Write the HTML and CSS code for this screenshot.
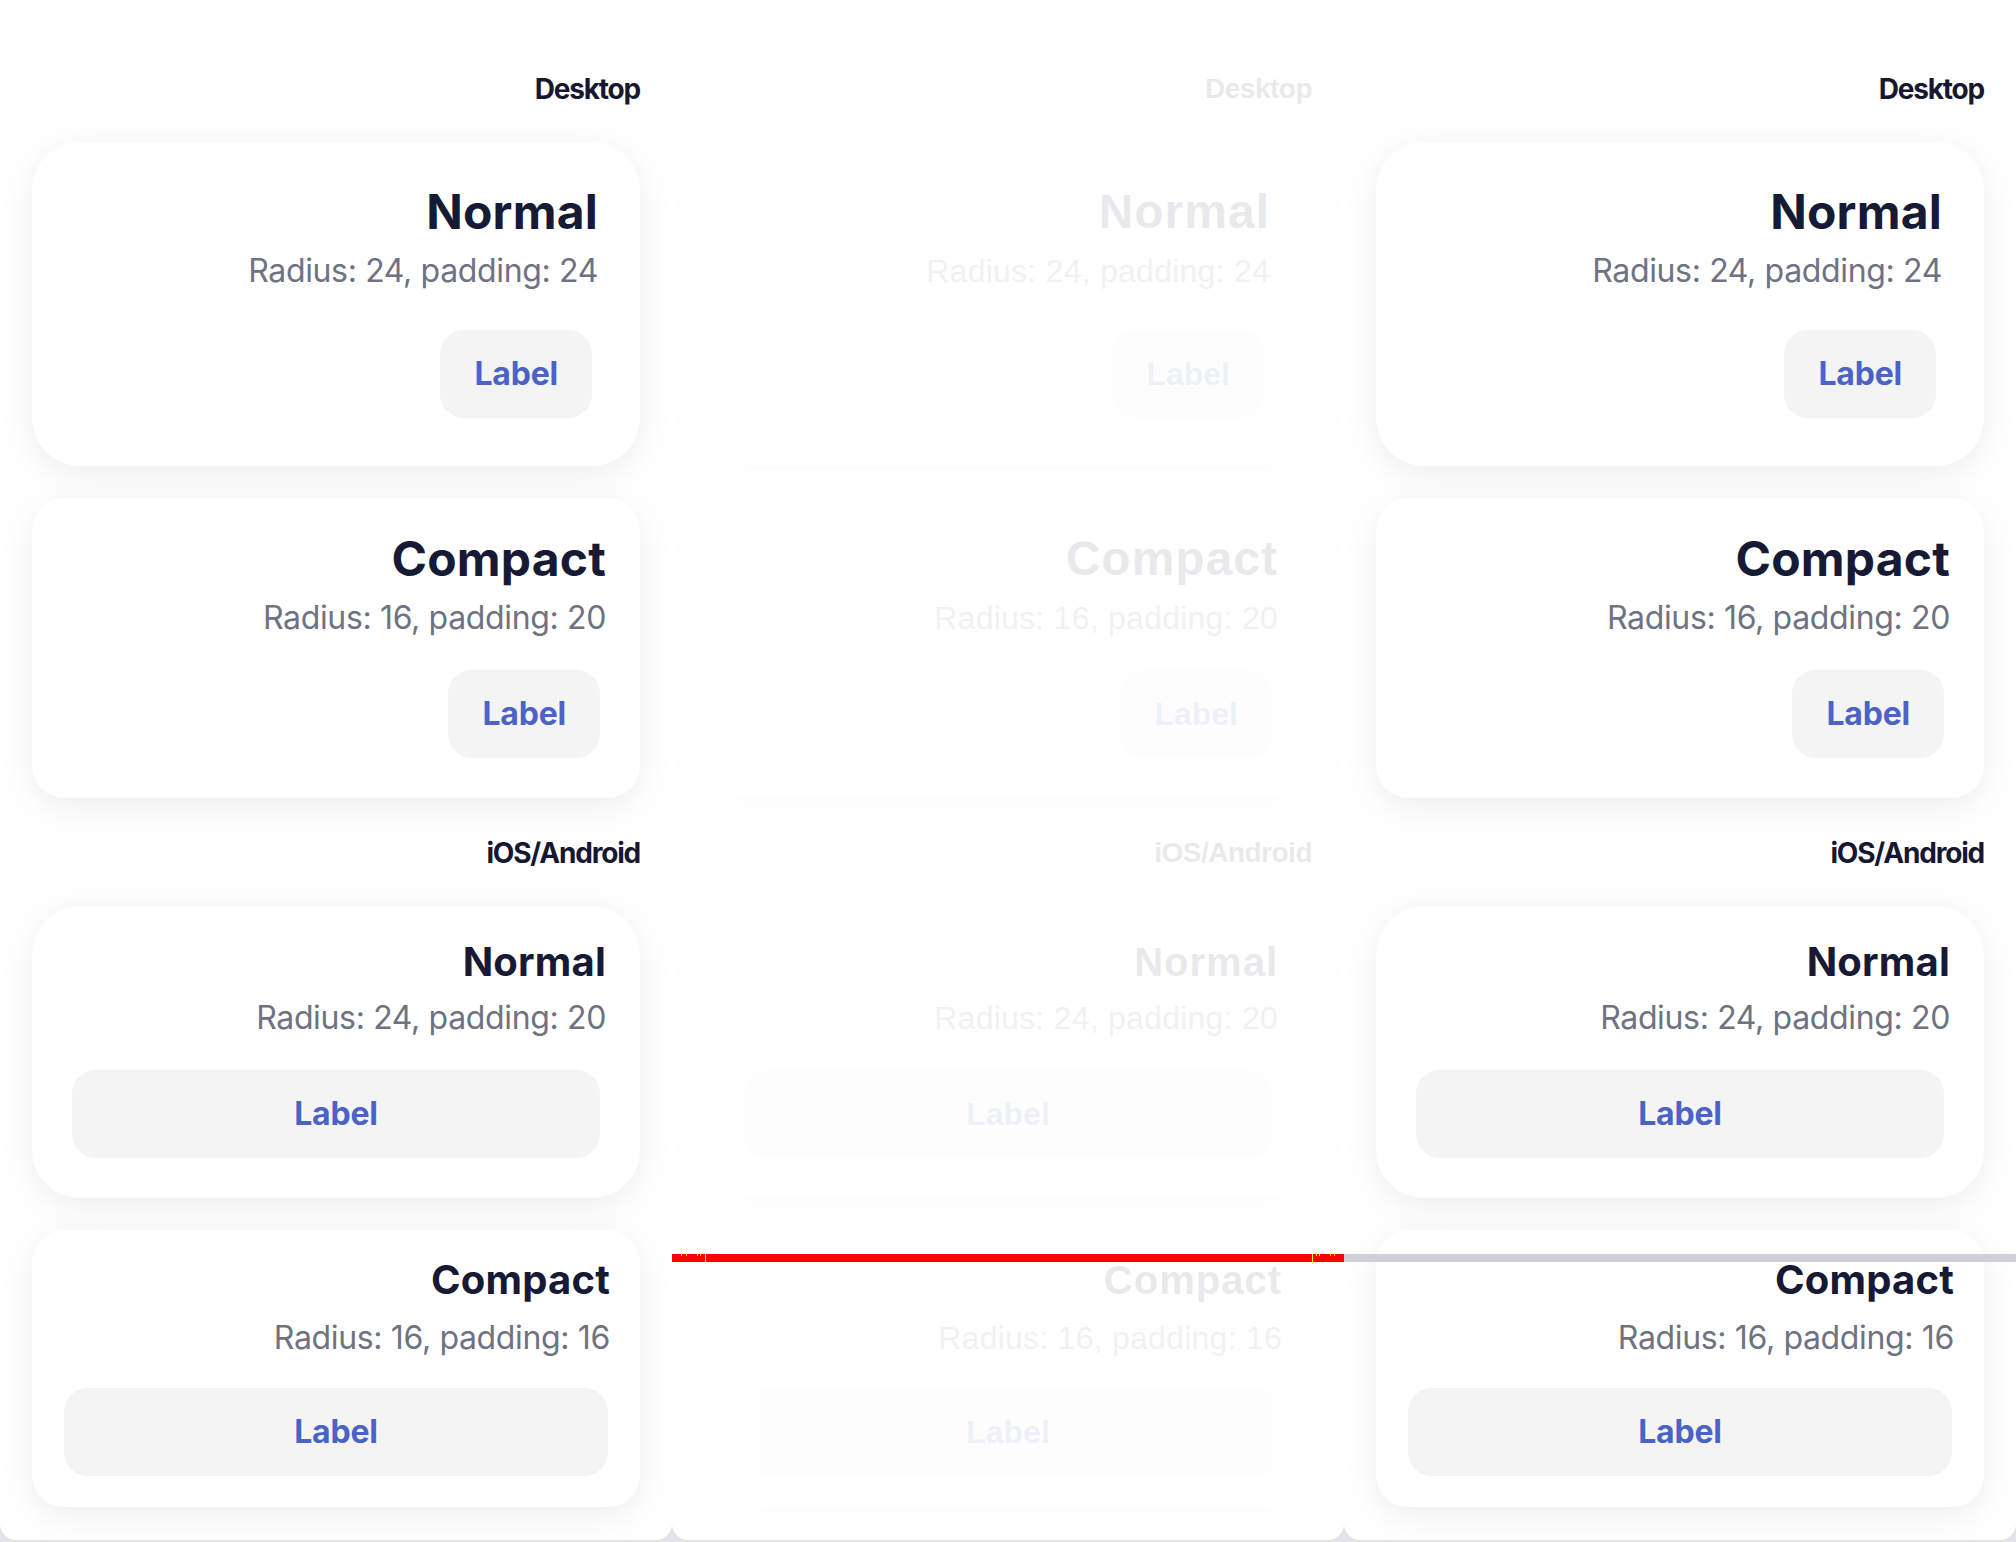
FILE: index.html
```html
<!DOCTYPE html>
<html lang="en">
<head>
<meta charset="utf-8">
<title>Card sizes</title>
<link rel="stylesheet" href="styles.css">
</head>
<body>
<div class="page">
  <section class="frame">
    <div class="frame-content">
      <div class="group">
        <div class="group-label">Desktop</div>
        <div class="card card-d-normal">
          <div class="card-head"><h2 class="card-title">Normal</h2><p class="card-sub">Radius: 24, padding: 24</p></div>
          <button class="btn">Label</button>
        </div>
        <div class="card card-d-compact">
          <div class="card-head"><h2 class="card-title">Compact</h2><p class="card-sub">Radius: 16, padding: 20</p></div>
          <button class="btn">Label</button>
        </div>
      </div>
      <div class="group">
        <div class="group-label">iOS/Android</div>
        <div class="card card-m-normal">
          <div class="card-head"><h2 class="card-title">Normal</h2><p class="card-sub">Radius: 24, padding: 20</p></div>
          <button class="btn">Label</button>
        </div>
        <div class="card card-m-compact">
          <div class="card-head"><h2 class="card-title">Compact</h2><p class="card-sub">Radius: 16, padding: 16</p></div>
          <button class="btn">Label</button>
        </div>
      </div>
    </div>
  </section>

  <section class="frame frame-ghost">
    <div class="frame-content">
      <div class="group">
        <div class="group-label">Desktop</div>
        <div class="card card-d-normal">
          <div class="card-head"><h2 class="card-title">Normal</h2><p class="card-sub">Radius: 24, padding: 24</p></div>
          <button class="btn">Label</button>
        </div>
        <div class="card card-d-compact">
          <div class="card-head"><h2 class="card-title">Compact</h2><p class="card-sub">Radius: 16, padding: 20</p></div>
          <button class="btn">Label</button>
        </div>
      </div>
      <div class="group">
        <div class="group-label">iOS/Android</div>
        <div class="card card-m-normal">
          <div class="card-head"><h2 class="card-title">Normal</h2><p class="card-sub">Radius: 24, padding: 20</p></div>
          <button class="btn">Label</button>
        </div>
        <div class="card card-m-compact">
          <div class="card-head"><h2 class="card-title">Compact</h2><p class="card-sub">Radius: 16, padding: 16</p></div>
          <button class="btn">Label</button>
        </div>
      </div>
    </div>
  </section>

  <section class="frame">
    <div class="frame-content">
      <div class="group">
        <div class="group-label">Desktop</div>
        <div class="card card-d-normal">
          <div class="card-head"><h2 class="card-title">Normal</h2><p class="card-sub">Radius: 24, padding: 24</p></div>
          <button class="btn">Label</button>
        </div>
        <div class="card card-d-compact">
          <div class="card-head"><h2 class="card-title">Compact</h2><p class="card-sub">Radius: 16, padding: 20</p></div>
          <button class="btn">Label</button>
        </div>
      </div>
      <div class="group">
        <div class="group-label">iOS/Android</div>
        <div class="card card-m-normal">
          <div class="card-head"><h2 class="card-title">Normal</h2><p class="card-sub">Radius: 24, padding: 20</p></div>
          <button class="btn">Label</button>
        </div>
        <div class="card card-m-compact">
          <div class="card-head"><h2 class="card-title">Compact</h2><p class="card-sub">Radius: 16, padding: 16</p></div>
          <button class="btn">Label</button>
        </div>
      </div>
    </div>
  </section>

  <div class="drop-bar">
    <div class="drop-hit">
      <span class="tick" style="left:9px"></span>
      <span class="tick" style="left:14px"></span>
      <span class="tick" style="left:25px"></span>
      <span class="tick" style="left:28px"></span>
      <span class="tick tick-tall" style="left:33px"></span>
      <span class="tick tick-tall" style="left:640px"></span>
      <span class="tick" style="left:644px"></span>
      <span class="tick" style="left:647px"></span>
      <span class="tick" style="left:658px"></span>
      <span class="tick" style="left:662px"></span>
    </div>
    <div class="drop-rest"></div>
  </div>
</div>
</body>
</html>
```

FILE: styles.css
```css
html, body {
  margin: 0;
  padding: 0;
}

body {
  width: 2016px;
  height: 1542px;
  overflow: hidden;
  background: #e4e4e6;
  font-family: "Inter", "Liberation Sans", sans-serif;
}

.page {
  position: relative;
  display: grid;
  grid-template-columns: repeat(3, 672px);
  height: 1540px;
}

.frame {
  position: relative;
  background: #ffffff;
  border-radius: 0 0 16px 16px;
  overflow: hidden;
}

.frame-content {
  padding: 69px 32px 0;
  display: flex;
  flex-direction: column;
  gap: 35px;
}

.frame-ghost .frame-content {
  opacity: 0.09;
  font-family: "Liberation Sans", Arial, sans-serif;
}

.group {
  display: flex;
  flex-direction: column;
  gap: 32px;
}

.group-label {
  font-size: 28px;
  line-height: 40px;
  font-weight: 700;
  color: #151830;
  text-align: right;
  margin-bottom: 1px;
  letter-spacing: -1.2px;
}

.card {
  background: #ffffff;
  box-shadow: 0 8px 36px rgba(0, 0, 0, 0.075);
  display: flex;
  flex-direction: column;
  align-items: flex-end;
}

.card-head {
  align-self: stretch;
  text-align: right;
  margin-right: -6px;
}

.card-title {
  margin: 0;
  font-size: 48px;
  line-height: 48px;
  font-weight: 700;
  color: #161a35;
  letter-spacing: 0.2px;
}

.card-sub {
  margin: 0;
  font-size: 32px;
  line-height: 48px;
  font-weight: 400;
  color: #6f7283;
  letter-spacing: -0.35px;
}

.btn {
  font-family: inherit;
  border: 0;
  background: #f4f4f5;
  color: #4b63c6;
  font-size: 32px;
  font-weight: 700;
  line-height: 88px;
  height: 88px;
  padding: 0 34px;
  border-radius: 24px;
  letter-spacing: -0.2px;
}

.frame-ghost .group-label { letter-spacing: -0.5px; }
.frame-ghost .card-title { letter-spacing: 1px; }
.frame-ghost .card-sub { letter-spacing: 0.25px; }
.frame-ghost .btn { letter-spacing: 0; }

/* Desktop / Normal: radius 24, padding 24 */
.card-d-normal {
  border-radius: 48px;
  padding: 46px 48px 48px;
}
.card-d-normal .card-title { margin-bottom: 11px; }
.card-d-normal .btn { margin-top: 35px; }

/* Desktop / Compact: radius 16, padding 20 */
.card-d-compact {
  border-radius: 32px;
  padding: 37px 40px 40px;
}
.card-d-compact .card-title { margin-bottom: 11px; }
.card-d-compact .btn { margin-top: 28px; }

/* iOS/Android / Normal: radius 24, padding 20 */
.card-m-normal {
  border-radius: 48px;
  padding: 36px 40px 40px;
  align-items: stretch;
}
.card-m-normal .card-title { font-size: 40px; line-height: 40px; margin-bottom: 12px; }
.card-m-normal .btn { margin-top: 28px; }

/* iOS/Android / Compact: radius 16, padding 16 */
.card-m-compact {
  border-radius: 32px;
  padding: 30px 32px 31px;
  align-items: stretch;
}
.card-m-compact .card-head { margin-right: -2px; }
.card-m-compact .card-title { font-size: 40px; line-height: 40px; margin-bottom: 14px; }
.card-m-compact .btn { margin-top: 26px; }

/* overlay drop indicator across the 2nd and 3rd frames */
.drop-bar {
  position: absolute;
  top: 1254px;
  left: 672px;
  width: 1344px;
  height: 8px;
  display: flex;
}

.drop-hit {
  position: relative;
  flex: 0 0 672px;
  background: #ff0000;
}

.drop-rest {
  flex: 1 1 auto;
  background: #d0d1d6;
}

.tick {
  position: absolute;
  top: -1px;
  width: 1px;
  height: 3px;
  background: #ffff00;
}

.tick-tall {
  top: 0;
  height: 10px;
}
```
